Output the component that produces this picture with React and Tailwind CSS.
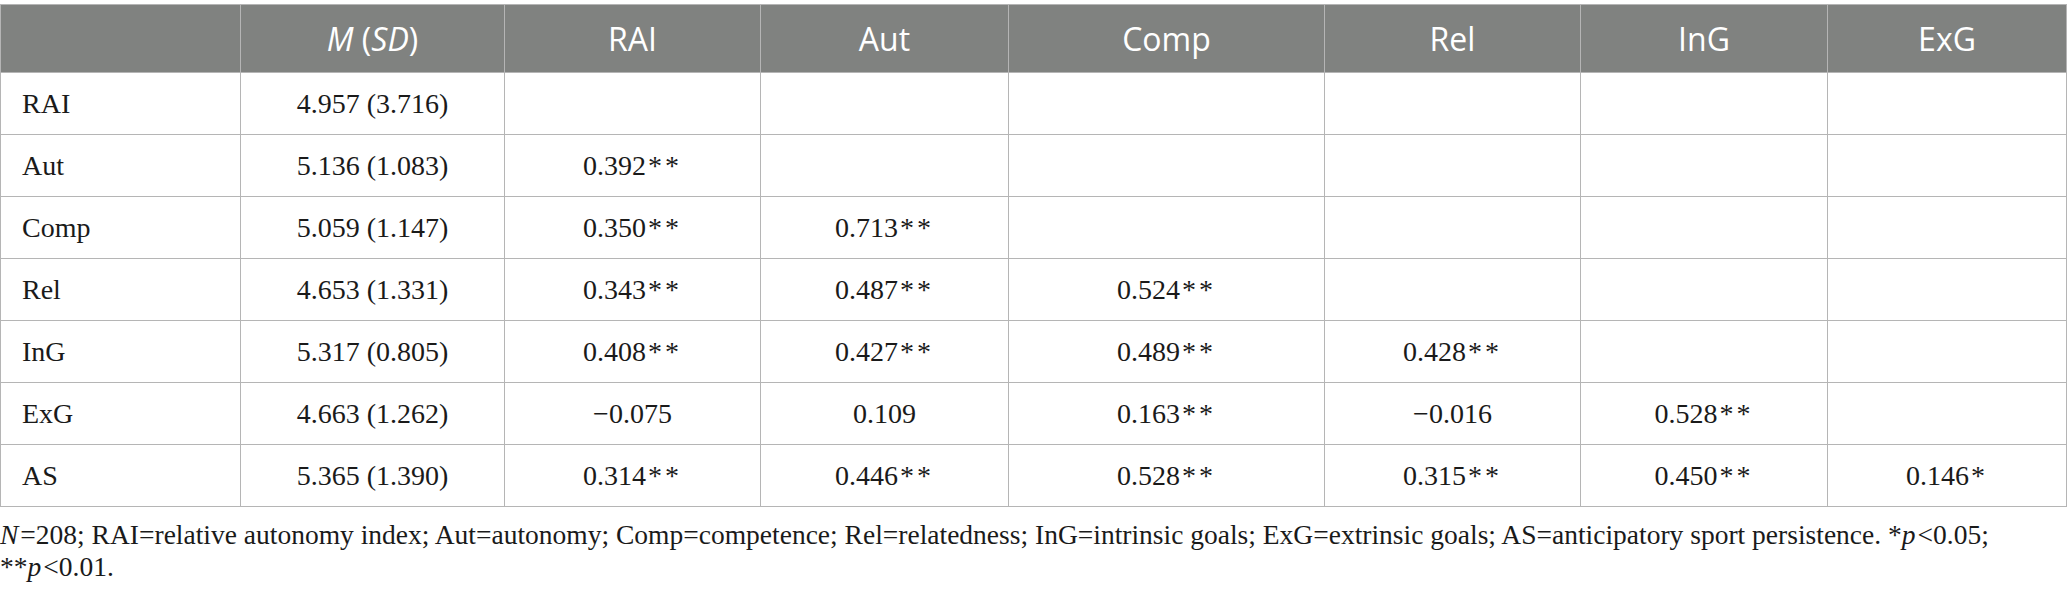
const cols = ['RAI', 'Aut', 'Comp', 'Rel', 'InG', 'ExG'];

const rows = [
  ['RAI', '4.957 (3.716)', []],
  ['Aut', '5.136 (1.083)', ['0.392**']],
  ['Comp', '5.059 (1.147)', ['0.350**', '0.713**']],
  ['Rel', '4.653 (1.331)', ['0.343**', '0.487**', '0.524**']],
  ['InG', '5.317 (0.805)', ['0.408**', '0.427**', '0.489**', '0.428**']],
  ['ExG', '4.663 (1.262)', ['\u22120.075', '0.109', '0.163**', '\u22120.016', '0.528**']],
  ['AS', '5.365 (1.390)', ['0.314**', '0.446**', '0.528**', '0.315**', '0.450**', '0.146*']],
];

const serif = { fontFamily: '"Liberation Serif", "Times New Roman", serif' };

// split "0.392**" into number and stars so the stars can be spaced like the original
function Value({ v }) {
  if (!v) return null;
  const m = v.match(/^([^*]+)(\**)$/);
  return (
    <span>
      {m[1]}
      {m[2] && <span className="ml-[2px] tracking-[3px]">{m[2]}</span>}
    </span>
  );
}

export default function App() {
  return (
    <div className="w-[2067px] h-[598px] bg-white overflow-hidden">
      <div className="mt-1 grid grid-cols-[240px_264px_256px_248px_316px_256px_247px_239px] border-t border-l border-[#b5b5b5]">
        <div className="h-[68px] bg-[#808280] border-r border-b border-[#b5b5b5]" />
        <div className="h-[68px] bg-[#808280] border-r border-b border-[#b5b5b5] flex items-center justify-center text-white text-[32px] font-['Open_Sans',sans-serif]">
          <span><i>M</i> (<i>SD</i>)</span>
        </div>
        {cols.map((c) => (
          <div
            key={c}
            className="h-[68px] bg-[#808280] border-r border-b border-[#b5b5b5] flex items-center justify-center text-white text-[32px] font-['Open_Sans',sans-serif]"
          >
            {c}
          </div>
        ))}

        {rows.map(([label, msd, vals]) => (
          <div key={label} className="contents">
            <div className="h-[62px] border-r border-b border-[#b5b5b5] flex items-center pl-[21px] text-[28px] text-[#1a1a1a]" style={serif}>
              {label}
            </div>
            <div className="h-[62px] border-r border-b border-[#b5b5b5] flex items-center justify-center text-[28px] text-[#1a1a1a]" style={serif}>
              {msd}
            </div>
            {cols.map((c, i) => (
              <div key={c} className="h-[62px] border-r border-b border-[#b5b5b5] flex items-center justify-center text-[28px] text-[#1a1a1a]" style={serif}>
                <Value v={vals[i]} />
              </div>
            ))}
          </div>
        ))}
      </div>

      <p className="mt-[12px] text-[27.5px] leading-[32px] text-[#1a1a1a]" style={serif}>
        <i className="pr-[2px]">N</i>=208; RAI=relative autonomy index; Aut=autonomy; Comp=competence; Rel=relatedness; InG=intrinsic goals; ExG=extrinsic goals; AS=anticipatory sport persistence. <span className="whitespace-nowrap">*<i className="pr-[2px]">p</i>{'<'}0.05;</span>{' '}
        <span className="whitespace-nowrap">**<i className="pr-[2px]">p</i>{'<'}0.01.</span>
      </p>
    </div>
  );
}
